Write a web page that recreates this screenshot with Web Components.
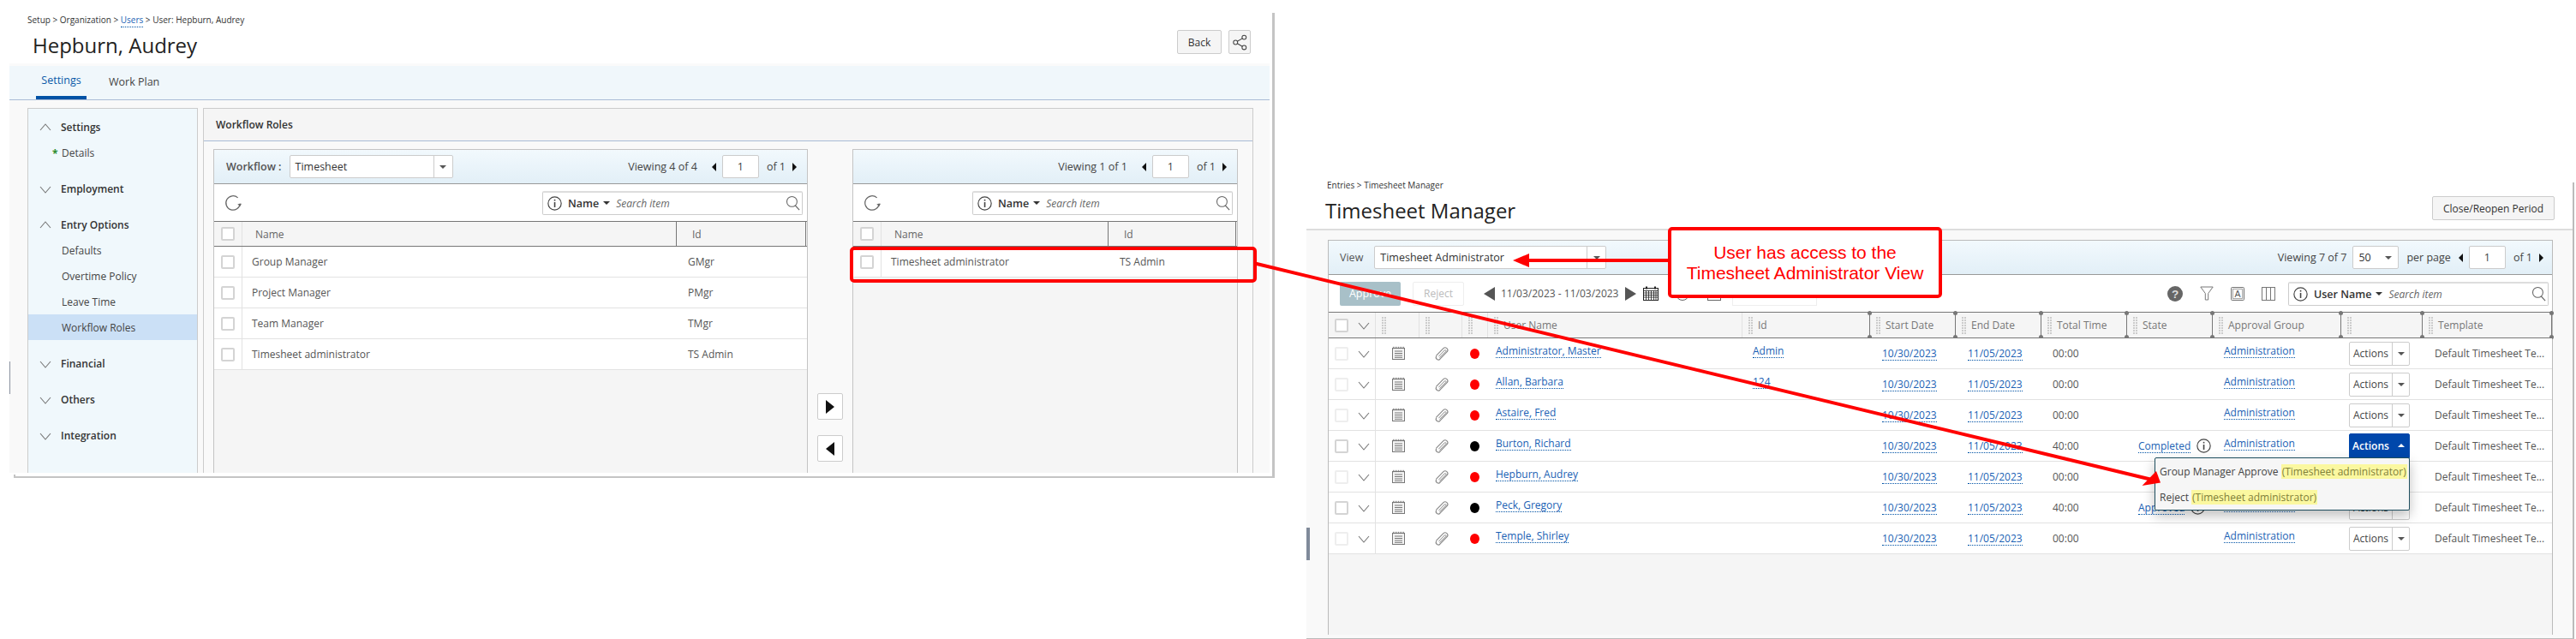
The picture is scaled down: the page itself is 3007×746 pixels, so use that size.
<!DOCTYPE html>
<html>
<head>
<meta charset="utf-8">
<title>Workflow roles and Timesheet Manager</title>
<style>
  html, body { margin: 0; background: #fff; }
  body {
    position: relative;
    width: 3007px;
    height: 746px;
    overflow: hidden;
    font: 12px "Open Sans", "Liberation Sans", sans-serif;
    color: #555;
  }
</style>
</head>
<body>

<user-window>
  <page-head heading="Hepburn, Audrey" top="0">
    <span slot="crumbs">Setup &gt; Organization &gt; <a-link>Users</a-link> &gt; User: Hepburn, Audrey</span>
    <ui-button slot="actions" width="52">Back</ui-button>
    <ui-button slot="actions" width="26"><ui-icon name="share" size="18"></ui-icon></ui-button>
  </page-head>
  <tab-bar slot="tabs"></tab-bar>
  <side-nav slot="nav">
    <nav-group label="Settings" open><nav-item mark>Details</nav-item></nav-group>
    <nav-group label="Employment"></nav-group>
    <nav-group label="Entry Options" open>
      <nav-item>Defaults</nav-item>
      <nav-item>Overtime Policy</nav-item>
      <nav-item>Leave Time</nav-item>
      <nav-item selected>Workflow Roles</nav-item>
    </nav-group>
    <nav-group label="Financial"></nav-group>
    <nav-group label="Others"></nav-group>
    <nav-group label="Integration"></nav-group>
  </side-nav>
  <role-list slot="left" workflow viewing="4 of 4" style="--name-w: 507px; width: 694px">
    <role-row name="Group Manager" code="GMgr"></role-row>
    <role-row name="Project Manager" code="PMgr"></role-row>
    <role-row name="Team Manager" code="TMgr"></role-row>
    <role-row name="Timesheet administrator" code="TS Admin"></role-row>
  </role-list>
  <role-list slot="right" viewing="1 of 1" style="--name-w: 265px; width: 450px">
    <role-row name="Timesheet administrator" code="TS Admin"></role-row>
  </role-list>
</user-window>

<timesheet-window>
  <page-head heading="Timesheet Manager" top="1">
    <span slot="crumbs">Entries &gt; Timesheet Manager</span>
    <ui-button slot="actions" width="143">Close/Reopen Period</ui-button>
  </page-head>
  <ts-row name="Administrator, Master" code="Admin" total="00:00" dot="red"></ts-row>
  <ts-row name="Allan, Barbara" code="124" total="00:00" dot="red"></ts-row>
  <ts-row name="Astaire, Fred" total="00:00" dot="red"></ts-row>
  <ts-row name="Burton, Richard" total="40:00" state="Completed" dot="black" open></ts-row>
  <ts-row name="Hepburn, Audrey" total="00:00" dot="red"></ts-row>
  <ts-row name="Peck, Gregory" total="40:00" state="Approved" dot="black"></ts-row>
  <ts-row name="Temple, Shirley" total="00:00" dot="red"></ts-row>
</timesheet-window>

<note-layer>User has access to the<br>Timesheet Administrator View</note-layer>

<script>
const icons = {
  chevDown: '<path d="M2 6l6 7 6-7" fill="none" stroke="#777" stroke-width="1.1"/>',
  chevUp: '<path d="M2 12l6-7 6 7" fill="none" stroke="#777" stroke-width="1.1"/>',
  refresh: '<path d="M12.5 3.6A6.6 6.6 0 1 0 14.6 9" fill="none" stroke="#666" stroke-width="1"/><path d="M12.2 9.5l2.4 2.2 1.4-2.6z" fill="#666"/>',
  info: '<circle cx="8" cy="8" r="7.2" fill="#fff" stroke="#444" stroke-width="1.1"/><rect x="7.3" y="6.6" width="1.5" height="5.6" fill="#444"/><rect x="7.3" y="3.6" width="1.5" height="1.6" fill="#444"/>',
  search: '<circle cx="7" cy="7" r="5.6" fill="none" stroke="#666" stroke-width="1"/><path d="M10.6 11.2l4.6 5" stroke="#666" stroke-width="1.2"/>',
  share: '<circle cx="3.5" cy="9" r="2.3" fill="none" stroke="#444"/><circle cx="13" cy="3.4" r="2.3" fill="none" stroke="#444"/><circle cx="13" cy="14.6" r="2.3" fill="none" stroke="#444"/><path d="M5.5 7.8l5.500-3.200M5.500 10.200l5.500 3.200" stroke="#444"/>',
  note: '<rect x="1.5" y="2.500" width="14" height="13" fill="#f4f4f4" stroke="#777"/><path d="M2.500 .8v2.400M4.500 .8v2.400M6.500 .8v2.400M8.500 .8v2.400M10.500 .8v2.400M12.500 .8v2.400M14.500 .8v2.400" stroke="#777" stroke-width=".9"/><path d="M4 6h9M4 8.500h9M4 11h9M4 13.300h9" stroke="#777"/>',
  clip: '<path d="M2.400 11.300L10.900 2.600a3 3 0 0 1 4.500 3.900L7.200 14.900a2.500 2.500 0 0 1-4.400-3.100" fill="none" stroke="#888" stroke-width="1.100"/><path d="M5.400 12.200L12.300 4.900a1.100 1.100 0 0 1 1.700 1.300L6.500 13.700" fill="none" stroke="#888" stroke-width="1"/>',
  help: '<circle cx="8" cy="8" r="8" fill="#666"/><text x="8" y="12.200" text-anchor="middle" font-family="Liberation Sans" font-weight="700" font-size="12" fill="#ddd">?</text>',
  filter: '<path d="M.8 1h14.400L9.700 8.500V16H6.300V8.500z" fill="none" stroke="#777"/>',
  letter: '<rect x=".5" y=".5" width="15" height="15" rx="1" fill="#eee" stroke="#777"/><rect x="2.500" y="2.500" width="11" height="11" fill="#fff" stroke="#aaa"/><text x="8" y="12.200" text-anchor="middle" font-family="Liberation Sans" font-size="10.500" fill="#555">A</text>',
  columns: '<rect x=".5" y=".5" width="15" height="15" fill="none" stroke="#777"/><path d="M5.500 .5v15M10.500 .5v15" stroke="#777"/>',
  calendar: '<rect x=".5" y="2.500" width="17" height="14" fill="#fff" stroke="#222"/><path d="M.5 5.500h17M.5 8h17M.5 10.500h17M.5 13h17M3.500 5v11M6.500 5v11M9.500 5v11M12.500 5v11M15 5v11" stroke="#222" stroke-width=".8"/><rect x="3" y=".5" width="2" height="3" fill="#222"/><rect x="13" y=".5" width="2" height="3" fill="#222"/>',
  clock: '<circle cx="8" cy="8" r="7.500" fill="none" stroke="#666"/>',
  box: '<rect x=".5" y=".5" width="15" height="15" fill="none" stroke="#666"/>'
}

class UiIcon extends HTMLElement {
  connectedCallback() {
    const size = this.getAttribute('size') || 16
    const h = this.getAttribute('h') || size
    const box = this.getAttribute('box') || '0 0 16 17'
    if (this.shadowRoot) return
    this.attachShadow({ mode: 'open' })
    this.shadowRoot.innerHTML = `<style>:host{display:inline-flex}svg{display:block;overflow:visible}</style>
      <svg width="${size}" height="${h}" viewBox="${box}">${icons[this.getAttribute('name')]}</svg>`
  }
}

class UiTri extends HTMLElement {
  connectedCallback() {
    const dir = this.getAttribute('dir')
    const w = this.getAttribute('w') || 5
    const h = this.getAttribute('h') || 5
    const col = this.getAttribute('color') || '#111'
    const side = { left: 'right', right: 'left', up: 'bottom', down: 'top' }[dir]
    const across = dir === 'left' || dir === 'right' ? ['top', 'bottom'] : ['left', 'right']
    this.attachShadow({ mode: 'open' })
    this.shadowRoot.innerHTML = `<style>:host{display:inline-block;width:0;height:0;
      border-${side}:${w}px solid ${col};border-${across[0]}:${h}px solid transparent;border-${across[1]}:${h}px solid transparent}</style>`
  }
}

class ACheck extends HTMLElement {
  connectedCallback() {
    const c = this.hasAttribute('dim') ? '#eeeeee' : '#d4d4d4'
    this.attachShadow({ mode: 'open' })
    this.shadowRoot.innerHTML = `<style>:host{display:block;box-sizing:border-box;width:16px;height:16px;background:#fff;
      border:2px solid ${c};border-radius:2px}</style>`
  }
}

class ALink extends HTMLElement {
  constructor() {
    super()
    this.attachShadow({ mode: 'open' })
    this.shadowRoot.innerHTML = `<style>:host{display:inline-block;color:#1a5fb4;border-bottom:1px dotted #0052a5;line-height:15px}</style><slot></slot>`
  }
}

class UiButton extends HTMLElement {
  connectedCallback() {
    this.attachShadow({ mode: 'open' })
    this.shadowRoot.innerHTML = `<style>:host{display:flex;align-items:center;justify-content:center;box-sizing:border-box;
      width:${this.getAttribute('width')}px;height:28px;background:#f5f5f5;border:1px solid #ccc;border-radius:2px;color:#333;font-size:12px}</style><slot></slot>`
  }
}

class UiSelect extends HTMLElement {
  connectedCallback() {
    const w = this.getAttribute('width')
    const arrow = this.getAttribute('arrow')
    this.attachShadow({ mode: 'open' })
    this.shadowRoot.innerHTML = `<style>
      :host{display:flex;align-items:center;box-sizing:border-box;width:${w}px;height:27px;background:#fff;
        border:1px solid #ccc;border-radius:2px;color:#333;font-size:12.5px}
      .val{flex:1;padding-left:6px;white-space:nowrap}
      .arr{display:flex;align-items:center;justify-content:center;width:${arrow}px;height:100%;border-left:${this.hasAttribute('plain') ? 0 : 1}px solid #ccc}
      </style><span class="val">${this.getAttribute('value')}</span><span class="arr"><ui-tri dir="down" w="4" h="4" color="#555"></ui-tri></span>`
  }
}

class UiSearch extends HTMLElement {
  connectedCallback() {
    this.attachShadow({ mode: 'open' })
    this.shadowRoot.innerHTML = `<style>
      :host{display:flex;align-items:center;box-sizing:border-box;width:${this.getAttribute('width')}px;height:28px;background:#fff;
        border:1px solid #ccc;border-top:2px solid #ddd;border-radius:2px;padding-left:5px;font-size:12.5px}
      b{font-weight:600;color:#333;margin-left:5px;white-space:nowrap}
      ui-tri{margin:0 7px 0 5px}
      i{flex:1;color:#666;font-size:12px}
      ui-icon{margin-right:2px}
      </style><ui-icon name="info" size="17" h="17" box="0 0 16 16"></ui-icon><b>${this.getAttribute('label')}</b><ui-tri dir="down" w="4" h="4" color="#333"></ui-tri>
      <i>Search item</i><ui-icon name="search" size="17" h="18"></ui-icon>`
  }
}

class UiPager extends HTMLElement {
  connectedCallback() {
    const per = this.hasAttribute('perpage')
    this.attachShadow({ mode: 'open' })
    this.shadowRoot.innerHTML = `<style>
      :host{display:flex;align-items:center;color:#444;font-size:12.5px}
      .n{display:flex;align-items:center;justify-content:center;box-sizing:border-box;width:43px;height:27px;background:#fff;border:1px solid #ccc;border-radius:2px;margin:0 9px 0 7px}
      .view{margin-right:${per ? 7 : 17}px}
      .per{margin:0 9px 0 9px}
      .next{margin-left:8px}
      </style><span class="view">Viewing ${this.getAttribute('viewing')}</span>
      ${per ? '<ui-select width="54" value="50" arrow="22" plain></ui-select><span class="per">per page</span>' : ''}
      <ui-tri dir="left"></ui-tri><span class="n">1</span><span>of 1</span><ui-tri class="next" dir="right"></ui-tri>`
  }
}

class PageHead extends HTMLElement {
  connectedCallback() {
    const alt = this.getAttribute('top') === '1'
    this.attachShadow({ mode: 'open' })
    this.shadowRoot.innerHTML = `<style>
      :host{display:block;position:relative;box-sizing:border-box;height:${alt ? 62 : 59}px;color:#333}
      .crumbs{padding-left:${alt ? 24 : 21}px;padding-top:${alt ? 4 : 1}px;height:${alt ? 16 : 15}px;font-size:10px;line-height:15px;white-space:nowrap}
      h1{margin:${alt ? 5 : 6}px 0 0 ${alt ? 22 : 27}px;font-weight:400;font-size:24px;line-height:32px;color:#222}
      .acts{position:absolute;right:${alt ? 23 : 22}px;top:${alt ? 24 : 20}px;display:flex;gap:8px}
      </style><div class="crumbs"><slot name="crumbs"></slot></div><h1>${this.getAttribute('heading')}</h1>
      <div class="acts"><slot name="actions"></slot></div>`
  }
}

class TabBar extends HTMLElement {
  constructor() {
    super()
    this.attachShadow({ mode: 'open' })
    this.shadowRoot.innerHTML = `<style>
      :host{display:flex;box-sizing:border-box;height:43px;padding-left:31px;background:#f0f7fb;border-top:3px solid #fafafa;border-bottom:1px solid #a9bcd6;font-size:12.5px}
      span{display:flex;align-items:center;box-sizing:border-box;height:39px;padding-bottom:2px;justify-content:center;color:#444}
      .on{width:59px;color:#0b5aa8;border-bottom:4px solid #0052a5}
      .off{margin-left:26px}
      </style><span class="on">Settings</span><span class="off">Work Plan</span>`
  }
}

class NavGroup extends HTMLElement {
  connectedCallback() {
    const open = this.hasAttribute('open')
    this.attachShadow({ mode: 'open' })
    this.shadowRoot.innerHTML = `<style>
      :host{display:block;margin-bottom:12px}
      .h{display:flex;align-items:center;height:30px;padding-left:12px;gap:10px;font-weight:600;color:#333;font-size:12px}
      </style><div class="h"><ui-icon name="${open ? 'chevUp' : 'chevDown'}" size="16" h="17"></ui-icon>${this.getAttribute('label')}</div><slot></slot>`
  }
}

class NavItem extends HTMLElement {
  connectedCallback() {
    const sel = this.hasAttribute('selected')
    this.attachShadow({ mode: 'open' })
    this.shadowRoot.innerHTML = `<style>
      :host{display:flex;align-items:center;height:30px;padding-left:39px;position:relative;background:${sel ? '#cbe0f6' : 'transparent'};color:#444;font-size:12px}
      .m{position:absolute;left:28px;top:8px;color:#2a8a2a;font-weight:700}
      </style>${this.hasAttribute('mark') ? '<span class="m">*</span>' : ''}<slot></slot>`
  }
}

class SideNav extends HTMLElement {
  constructor() {
    super()
    this.attachShadow({ mode: 'open' })
    this.shadowRoot.innerHTML = `<style>
      :host{display:block;box-sizing:border-box;width:200px;background:#f0f8fc;border:1px solid #ccc;border-bottom:0;padding-top:6px}
      </style><slot></slot>`
  }
}

class RoleRow extends HTMLElement {
  connectedCallback() {
    this.attachShadow({ mode: 'open' })
    this.shadowRoot.innerHTML = `<style>
      :host{display:grid;grid-template-columns:33px var(--name-w) 1fr;height:36px;box-sizing:border-box;background:#fff;border-bottom:1px solid #e2e2e2;font-size:12px}
      div{display:flex;align-items:center}
      .c{justify-content:center;border-right:1px solid #e2e2e2;padding-right:1px}
      .n{padding-left:11px}
      .i{padding-left:13px}
      </style><div class="c"><a-check></a-check></div><div class="n">${this.getAttribute('name')}</div><div class="i">${this.getAttribute('code')}</div>`
  }
}

class RoleList extends HTMLElement {
  connectedCallback() {
    const wf = this.hasAttribute('workflow')
    this.attachShadow({ mode: 'open' })
    this.shadowRoot.innerHTML = `<style>
      :host{display:flex;flex-direction:column;box-sizing:border-box;border:1px solid #c4c4c4;border-bottom:0;background:#f5f5f5}
      .bar{display:flex;align-items:center;box-sizing:border-box;height:40px;padding:0 12px 0 14px;background:linear-gradient(#f2f9fd,#e2eff7);border-bottom:1px solid #999}
      .wf{color:#555;font-weight:600;margin-right:9px;font-size:12.5px}
      .pg{margin-left:auto}
      .tools{display:flex;align-items:center;justify-content:space-between;box-sizing:border-box;height:44px;padding:0 5px 0 12px;background:#fff;border-bottom:1px solid #777}
      .hd{display:grid;grid-template-columns:33px var(--name-w) 1fr;box-sizing:border-box;height:29px;background:#f5f5f5;border-bottom:1px solid #777;color:#666;font-size:12px}
      .hd div{display:flex;align-items:center}
      .hd .c{justify-content:center;border-right:1px solid #e2e2e2;padding-right:1px}
      .hd .n{padding-left:15px;border-right:1px solid #777}
      .hd .i{padding-left:18px;border-right:1px solid #777;margin-right:1px}
      </style>
      <div class="bar">${wf ? '<span class="wf">Workflow :</span><ui-select width="191" value="Timesheet" arrow="21"></ui-select>' : ''}
        <ui-pager class="pg" viewing="${this.getAttribute('viewing')}"></ui-pager></div>
      <div class="tools"><ui-icon name="refresh" size="20" h="22"></ui-icon><ui-search label="Name" width="304"></ui-search></div>
      <div class="hd"><div class="c"><a-check></a-check></div><div class="n">Name</div><div class="i">Id</div></div>
      <slot></slot>`
  }
}

class UserWindow extends HTMLElement {
  constructor() {
    super()
    this.attachShadow({ mode: 'open' })
    this.shadowRoot.innerHTML = `<style>
      :host{position:absolute;left:11px;top:15px;width:1477px;height:543px;box-sizing:border-box;display:flex;flex-direction:column;
        border-right:3px solid #c4c4c4;padding:0 3px 6px 0}
      /* bottom edge of the pasted screenshot starts a little in from the left */
      :host::after{content:"";position:absolute;left:5px;right:0;bottom:0;height:4px;border-left:2px solid #c4c4c4;border-bottom:2px solid #c4c4c4;box-sizing:border-box}
      :host::before{content:"";position:absolute;left:0;top:407px;width:1px;height:38px;background:#8a92a0}
      .body{flex:1;display:flex;gap:6px;min-height:0;padding:9px 19px 0 21px;background:#f9f9f9}
      .panel{flex:1;display:flex;flex-direction:column;box-sizing:border-box;border:1px solid #ccc;border-bottom:0}
      .title{display:flex;align-items:center;box-sizing:border-box;height:38px;padding-left:14px;background:#f5f5f5;border-bottom:1px solid #a9bcd6;color:#333;font-weight:600;font-size:12px}
      .lists{flex:1;display:flex;padding:9px 17px 0 11px;min-height:0}
      .move{display:flex;flex-direction:column;gap:18px;width:52px;align-items:center;padding-top:285px;box-sizing:border-box}
      .move div{display:flex;align-items:center;justify-content:center;width:30px;height:31px;box-sizing:border-box;background:#fff;border:1px solid #ccc;border-radius:2px}
      </style>
      <slot></slot>
      <slot name="tabs"></slot>
      <div class="body">
        <slot name="nav"></slot>
        <div class="panel">
          <div class="title">Workflow Roles</div>
          <div class="lists">
            <slot name="left"></slot>
            <div class="move"><div><ui-tri dir="right" w="10" h="8"></ui-tri></div><div><ui-tri dir="left" w="10" h="8"></ui-tri></div></div>
            <slot name="right"></slot>
          </div>
        </div>
      </div>`
  }
}

const tsCols = '55px 51px 50px 30px 297px 149px 100px 100px 100px 100px 150px 95px 1fr'

class TsRow extends HTMLElement {
  connectedCallback() {
    const a = n => this.getAttribute(n) || ''
    const dim = a('dot') === 'red'
    const open = this.hasAttribute('open')
    const state = a('state')
    this.attachShadow({ mode: 'open' })
    this.shadowRoot.innerHTML = `<style>
      :host{display:grid;grid-template-columns:${tsCols};height:36px;box-sizing:border-box;background:#fff;border-bottom:1px solid #e2e2e2;position:relative;font-size:12px}
      :host([open]){z-index:2}
      .cell{display:flex;align-items:center;white-space:nowrap;min-width:0}
      .chk{gap:10px;padding-left:7px;border-right:1px solid #e2e2e2}
      .mid{justify-content:center}
      .dot{width:11px;height:12px;border-radius:50%;background:${a('dot')}}
      .up{padding-bottom:5px}
      .act{padding:0 0 0 9px;position:relative}
      .btn{display:flex;align-items:center;box-sizing:border-box;width:71px;height:28px;background:#fff;border:1px solid #ccc;border-radius:2px;color:#444}
      .btn span{width:49px;text-align:center;flex:none}
      .btn em{display:flex;align-items:center;justify-content:center;flex:1;height:100%;border-left:1px solid #ccc}
      .btn.on{background:#0047ab;border-color:#0047ab;color:#fff;font-weight:600;border-radius:2px 2px 0 0;height:29px;margin-top:-1px}
      .btn.on em{border-left-color:#0047ab}
      .menu{position:absolute;right:15px;top:31px;width:298px;height:62px;box-sizing:border-box;background:#f6f6f6;border:1px solid #1f4f5f;border-radius:2px;box-shadow:0 6px 14px rgba(0,0,0,.25);color:#444;font-size:12px;padding:7px 5px}
      .menu div{height:30px;display:flex;align-items:flex-start;white-space:pre}
      mark{background:#fbf8a0;color:#80803a;line-height:17px;padding:0 1px}
      .menu span{line-height:17px}
      </style>
      <div class="cell chk"><a-check ${dim ? 'dim' : ''}></a-check><ui-icon name="chevDown" size="16" h="17"></ui-icon></div>
      <div class="cell mid"><ui-icon name="note" size="16" h="17"></ui-icon></div>
      <div class="cell mid"><ui-icon name="clip" size="18" h="17"></ui-icon></div>
      <div class="cell mid" style="padding-right:2px"><div class="dot"></div></div>
      <div class="cell up" style="padding-left:9px"><a-link>${a('name')}</a-link></div>
      <div class="cell up" style="padding-left:12px">${a('code') ? `<a-link>${a('code')}</a-link>` : ''}</div>
      <div class="cell" style="padding-left:14px"><a-link>10/30/2023</a-link></div>
      <div class="cell" style="padding-left:14px"><a-link>11/05/2023</a-link></div>
      <div class="cell" style="padding-left:13px">${a('total')}</div>
      <div class="cell" style="padding-left:13px">${state ? `<a-link>${state}</a-link><ui-icon name="info" size="17" h="17" box="0 0 16 16" style="margin-left:7px"></ui-icon>` : ''}</div>
      <div class="cell up" style="padding-left:13px"><a-link>Administration</a-link></div>
      <div class="cell act">
        <div class="btn ${open ? 'on' : ''}"><span>Actions</span><em><ui-tri dir="${open ? 'up' : 'down'}" w="4" h="4" color="${open ? '#fff' : '#555'}"></ui-tri></em></div>
        ${open ? `<div class="menu"><div><span>Group Manager Approve </span><mark>(Timesheet administrator)</mark></div><div><span>Reject </span><mark>(Timesheet administrator)</mark></div></div>` : ''}
      </div>
      <div class="cell" style="padding-left:14px;color:#555">Default Timesheet Te...</div>`
  }
}

class TimesheetWindow extends HTMLElement {
  constructor() {
    super()
    const heads = ['', '', '', 'User Name', 'Id', 'Start Date', 'End Date', 'Total Time', 'State', 'Approval Group', '', 'Template']
    const cells = heads.map((t, i) => `<div class="hc ${i > 3 ? 'dark' : ''}"><i></i>${t}</div>`).join('')
    this.attachShadow({ mode: 'open' })
    this.shadowRoot.innerHTML = `<style>
      :host{position:absolute;left:1525px;top:205px;width:1480px;height:541px;box-sizing:border-box;display:flex;flex-direction:column;border-bottom:1px solid #bbb}
      :host::after{content:"";position:absolute;right:0;top:8px;bottom:0;width:2px;background:#bbb}
      :host::before{content:"";position:absolute;left:0;top:411px;width:4px;height:38px;background:#808a9a}
      .body{flex:1;display:flex;min-height:0;padding:11px 23px 4px 25px;background:#f9f9f9;border-top:2px solid #ddd;margin-right:2px}
      .panel{flex:1;display:flex;flex-direction:column;box-sizing:border-box;background:#f5f5f5;border:1px solid #bbb;border-bottom:0}
      .bar{display:flex;align-items:center;justify-content:space-between;box-sizing:border-box;height:40px;padding:0 10px 0 13px;background:linear-gradient(#f2f9fd,#e2eff7);border-bottom:1px solid #999}
      .left{display:flex;align-items:center;gap:13px;color:#555;font-size:12.5px}
      .tools{display:flex;align-items:center;box-sizing:border-box;height:44px;padding:0 4px 0 13px;background:#fff;border-bottom:1px solid #777;font-size:12px}
      .appr{display:flex;align-items:center;justify-content:center;width:71px;height:28px;background:#a8c0c8;color:#fff;border-radius:2px;font-size:12.5px}
      .rej{display:flex;align-items:center;justify-content:center;width:60px;height:28px;box-sizing:border-box;background:#fff;border:1px solid #eee;color:#bbb;margin:0 23px 0 14px;border-radius:2px}
      .date{margin:0 8px 0 7px;color:#555;white-space:nowrap}
      .sel{width:99px;height:28px;box-sizing:border-box;border:1px solid #eee;margin-left:12px}
      .sp{flex:1}
      .tools ui-icon.t{margin-right:20px}
      .hd{display:grid;grid-template-columns:${tsCols};box-sizing:border-box;height:30px;background:#f5f5f5;border-bottom:1px solid #777;color:#777;font-size:12px}
      .first{display:flex;align-items:center;gap:10px;padding-left:7px;border-right:1px solid #e2e2e2}
      .hc{display:flex;align-items:center;white-space:nowrap;border-right:1px solid #e2e2e2;padding-left:7px;position:relative}
      .hc i{width:5px;height:20px;margin-right:6px;flex:none;background:
        repeating-linear-gradient(#ccc 0 2px,transparent 2px 3px) left/2px 100% no-repeat,
        repeating-linear-gradient(#ccc 0 2px,transparent 2px 3px) right/2px 100% no-repeat}
      .hc.dark{border-right-color:#777}
      .hc.dark::before,.hc.dark::after{content:"";position:absolute;right:-3px;width:5px;height:5px;border-radius:50%;background:#777}
      .hc.dark::before{top:-2px}
      .hc.dark::after{bottom:-2px}
      .fill{flex:1}
      </style>
      <slot></slot>
      <div class="body"><div class="panel">
        <div class="bar">
          <div class="left"><span>View</span><ui-select width="271" value="Timesheet Administrator" arrow="21"></ui-select></div>
          <ui-pager perpage viewing="7 of 7"></ui-pager>
        </div>
        <div class="tools">
          <span class="appr">Approve</span><span class="rej">Reject</span>
          <ui-tri dir="left" w="13" h="8" color="#555"></ui-tri><span class="date">11/03/2023 - 11/03/2023</span><ui-tri dir="right" w="13" h="8" color="#555"></ui-tri>
          <ui-icon name="calendar" size="18" h="17" box="0 0 18 17" style="margin:0 20px 0 8px"></ui-icon>
          <ui-icon class="t" name="clock" size="16" h="16" box="0 0 16 16"></ui-icon>
          <ui-icon name="box" size="18" h="16" box="0 0 16 16"></ui-icon>
          <span class="sel"></span>
          <span class="sp"></span>
          <ui-icon class="t" name="help" size="18" h="18" box="0 0 16 16"></ui-icon>
          <ui-icon class="t" name="filter" size="16" h="17"></ui-icon>
          <ui-icon class="t" name="letter" size="16" h="16" box="0 0 16 16"></ui-icon>
          <ui-icon name="columns" size="16" h="16" box="0 0 16 16" style="margin-right:15px"></ui-icon>
          <ui-search label="User Name" width="304"></ui-search>
        </div>
        <div class="hd"><div class="first"><a-check></a-check><ui-icon name="chevDown" size="16" h="17"></ui-icon></div>${cells}</div>
        <slot name="rows"></slot>
        <div class="fill"></div>
      </div></div>`
  }
  connectedCallback() {
    this.querySelectorAll('ts-row').forEach(r => r.setAttribute('slot', 'rows'))
  }
}

class NoteLayer extends HTMLElement {
  constructor() {
    super()
    this.attachShadow({ mode: 'open' })
    this.shadowRoot.innerHTML = `<style>
      :host{position:absolute;inset:0;z-index:5;pointer-events:none}
      svg{position:absolute;left:0;top:0}
      .call{position:absolute;left:1947px;top:265px;width:320px;height:83px;box-sizing:border-box;display:flex;align-items:center;justify-content:center;text-align:center;
        background:#fff;border:4px solid #f00;border-radius:5px;color:#f00;font:21px/24px "Liberation Sans",sans-serif}
      </style>
      <svg width="3007" height="746" viewBox="0 0 3007 746">
        <rect x="994" y="290" width="471" height="38" rx="3" fill="none" stroke="#f00" stroke-width="4"/>
        <path d="M1465 307.500L2512 560" stroke="#f00" stroke-width="4"/>
        <path d="M2522 563.500L2517 550L2500.500 567z" fill="#f00"/>
        <path d="M1947 304H1783" stroke="#f00" stroke-width="4"/>
        <path d="M1766 304L1785 296V312z" fill="#f00"/>
      </svg>
      <div class="call"><slot></slot></div>`
  }
}

customElements.define('ui-icon', UiIcon)
customElements.define('ui-tri', UiTri)
customElements.define('a-check', ACheck)
customElements.define('a-link', ALink)
customElements.define('ui-button', UiButton)
customElements.define('ui-select', UiSelect)
customElements.define('ui-search', UiSearch)
customElements.define('ui-pager', UiPager)
customElements.define('page-head', PageHead)
customElements.define('tab-bar', TabBar)
customElements.define('nav-group', NavGroup)
customElements.define('nav-item', NavItem)
customElements.define('side-nav', SideNav)
customElements.define('role-row', RoleRow)
customElements.define('role-list', RoleList)
customElements.define('user-window', UserWindow)
customElements.define('ts-row', TsRow)
customElements.define('timesheet-window', TimesheetWindow)
customElements.define('note-layer', NoteLayer)
</script>
</body>
</html>
